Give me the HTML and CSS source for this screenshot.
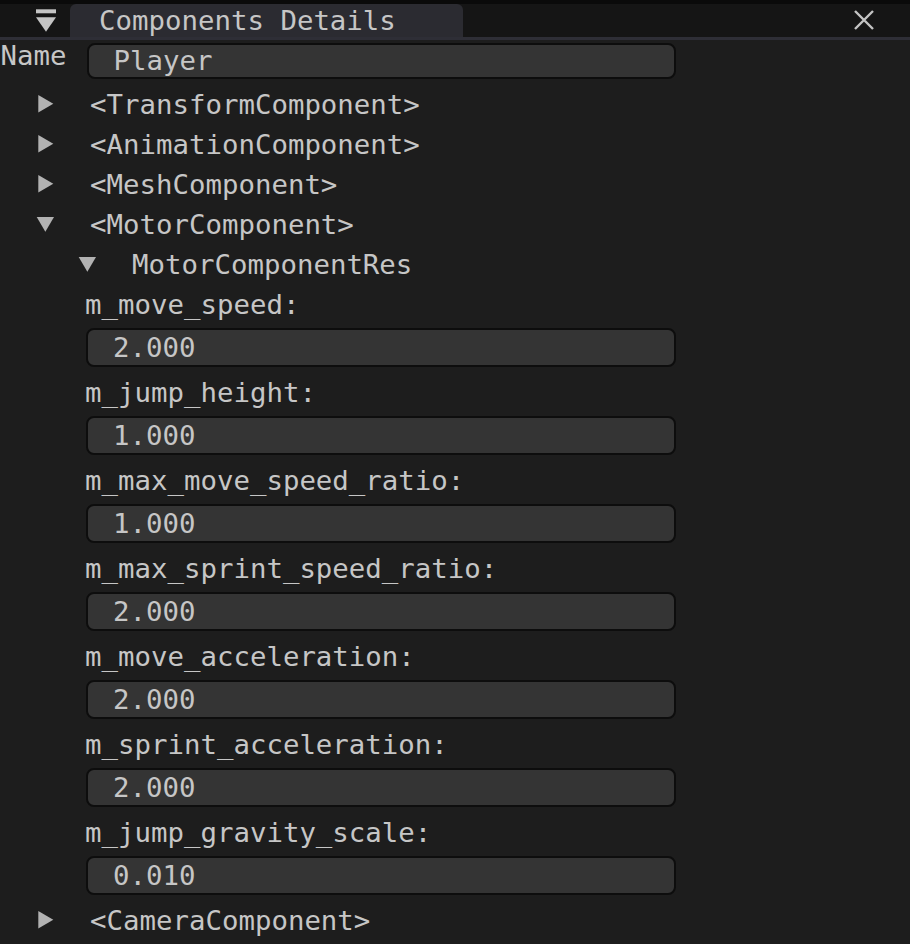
FILE: index.html
```html
<!DOCTYPE html>
<html>
<head>
<meta charset="utf-8">
<link rel="stylesheet" href="styles.css">
</head>
<body>
<div class="window">
  <div class="titlebar">
    <svg class="collapse" width="20" height="23" viewBox="0 0 20 23"><rect x="0" y="0.3" width="20" height="4" fill="#c4c4c4"/><polygon points="0,8.3 20,8.3 10,22.7" fill="#c4c4c4"/></svg>
    <div class="tab">Components Details</div>
    <svg class="close" width="20" height="20" viewBox="0 0 20 20"><path d="M1 1 L19 19 M19 1 L1 19" stroke="#c4c4c4" stroke-width="2.4" fill="none"/></svg>
  </div>
  <div class="separator"></div>
  <div class="content">
    <div class="name-row">
      <span class="name-label">Name</span>
      <div class="input name-input">Player</div>
    </div>
    <div class="tree">
      <div class="node"><svg class="arrow" width="18" height="18" viewBox="0 0 18 18"><polygon points="2.3,0 17.3,8.75 2.3,17.5"/></svg><span>&lt;TransformComponent&gt;</span></div>
      <div class="node"><svg class="arrow" width="18" height="18" viewBox="0 0 18 18"><polygon points="2.3,0 17.3,8.75 2.3,17.5"/></svg><span>&lt;AnimationComponent&gt;</span></div>
      <div class="node"><svg class="arrow" width="18" height="18" viewBox="0 0 18 18"><polygon points="2.3,0 17.3,8.75 2.3,17.5"/></svg><span>&lt;MeshComponent&gt;</span></div>
      <div class="node"><svg class="arrow" width="18" height="18" viewBox="0 0 18 18"><polygon points="0.7,2 18,2 9.35,16.7"/></svg><span>&lt;MotorComponent&gt;</span></div>
      <div class="node nested"><svg class="arrow" width="18" height="18" viewBox="0 0 18 18"><polygon points="0.7,2 18,2 9.35,16.7"/></svg><span>MotorComponentRes</span></div>
      <div class="field"><div class="label">m_move_speed:</div><div class="input">2.000</div></div>
      <div class="field"><div class="label">m_jump_height:</div><div class="input">1.000</div></div>
      <div class="field"><div class="label">m_max_move_speed_ratio:</div><div class="input">1.000</div></div>
      <div class="field"><div class="label">m_max_sprint_speed_ratio:</div><div class="input">2.000</div></div>
      <div class="field"><div class="label">m_move_acceleration:</div><div class="input">2.000</div></div>
      <div class="field"><div class="label">m_sprint_acceleration:</div><div class="input">2.000</div></div>
      <div class="field"><div class="label">m_jump_gravity_scale:</div><div class="input">0.010</div></div>
      <div class="node"><svg class="arrow" width="18" height="18" viewBox="0 0 18 18"><polygon points="2.3,0 17.3,8.75 2.3,17.5"/></svg><span>&lt;CameraComponent&gt;</span></div>
    </div>
  </div>
</div>
</body>
</html>
```
FILE: styles.css
```css
html, body {
  margin: 0;
  padding: 0;
  height: 100%;
  overflow: hidden;
}
body {
  background: #1d1d1d;
  font-family: "DejaVu Sans Mono", "Liberation Mono", monospace;
  font-size: 27.4px;
  color: #c6c6c6;
}
.titlebar {
  display: flex;
  height: 33px;
  border-top: 4px solid #0a0a0a;
  background: #151515;
}
.collapse {
  margin-left: 36px;
  margin-top: 5px;
  flex: none;
}
.tab {
  box-sizing: border-box;
  margin-left: 14px;
  width: 393px;
  height: 33px;
  padding-left: 29px;
  line-height: 33px;
  background: #2b2b31;
  border-radius: 6px 6px 0 0;
  white-space: nowrap;
  flex: none;
}
.close {
  margin-left: auto;
  margin-right: 36px;
  margin-top: 6px;
  flex: none;
}
.separator {
  height: 3px;
  background: #2e2e36;
}
.name-row {
  display: flex;
  height: 39px;
}
.name-label {
  width: 86px;
  padding-left: 0.5px;
  line-height: 32px;
  flex: none;
}
.input {
  box-sizing: border-box;
  width: 590px;
  height: 39px;
  margin-left: 86px;
  padding-left: 25px;
  border: 2px solid #0d0d0d;
  border-radius: 8px;
  background: #343434;
  display: flex;
  align-items: center;
  line-height: 32px;
}
.name-input {
  margin-left: 0;
  margin-top: 3px;
  height: 36px;
  width: 589px;
}
.tree {
  margin-top: 9.5px;
}
.node {
  display: flex;
  height: 40px;
  line-height: 32px;
  padding-left: 36px;
}
.node.nested {
  padding-left: 78px;
}
.arrow {
  flex: none;
  margin-top: 6.5px;
  margin-right: 36px;
  fill: #b2b2b2;
}
.field {
  margin-bottom: 9.5px;
}
.label {
  height: 39.5px;
  line-height: 32px;
  padding-left: 85px;
}
```
